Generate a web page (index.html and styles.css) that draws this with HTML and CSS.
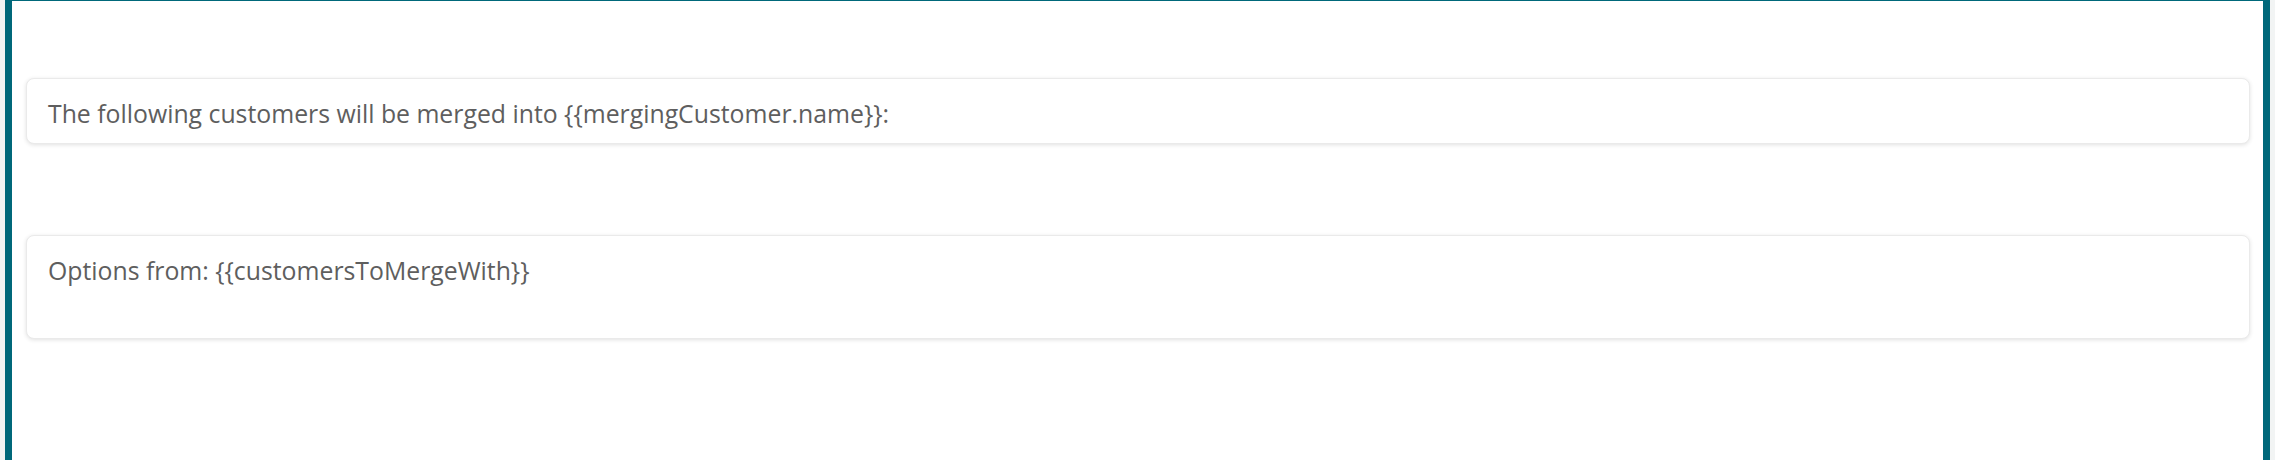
FILE: index.html
```html
<!DOCTYPE html>
<html lang="en">
<head>
  <meta charset="UTF-8" />
  <meta name="viewport" content="width=device-width, initial-scale=1" />
  <title>Merge Customers</title>
  <link rel="stylesheet" href="styles.css">
</head>
<body>
  <div class="merge-panel">
    <div class="merge-card">
      <p>The following customers will be merged into {{mergingCustomer.name}}:</p>
    </div>
    <div class="merge-card options-card">
      <p>Options from: {{customersToMergeWith}}</p>
      <div class="options-list"></div>
    </div>
  </div>
</body>
</html>
```

FILE: styles.css
```css
* {
  margin: 0;
  padding: 0;
  box-sizing: border-box;
}
body {
  font-family: 'Open Sans', 'Noto Sans', sans-serif;
  background-color: #f2f4f4;
  color: #5e5e5e;
  height: 100vh;
  overflow: hidden;
}
.merge-panel {
  margin: 0 5px;
  min-height: 100vh;
  background: #ffffff;
  border-top: 1px solid #00687a;
  border-left: 7px solid #00687a;
  border-right: 7px solid #00687a;
  padding: 77px 13px 0 14px;
}
.merge-card {
  background: #ffffff;
  border: 1px solid #eaeaea;
  border-radius: 8px;
  box-shadow: 0 1px 4px rgba(0, 0, 0, 0.12);
  padding: 16px 21px 12px;
}
.merge-card p {
  font-size: 24.8px;
  line-height: 36px;
}
.options-card {
  margin-top: 91px;
}
.options-list {
  min-height: 38px;
}
```
